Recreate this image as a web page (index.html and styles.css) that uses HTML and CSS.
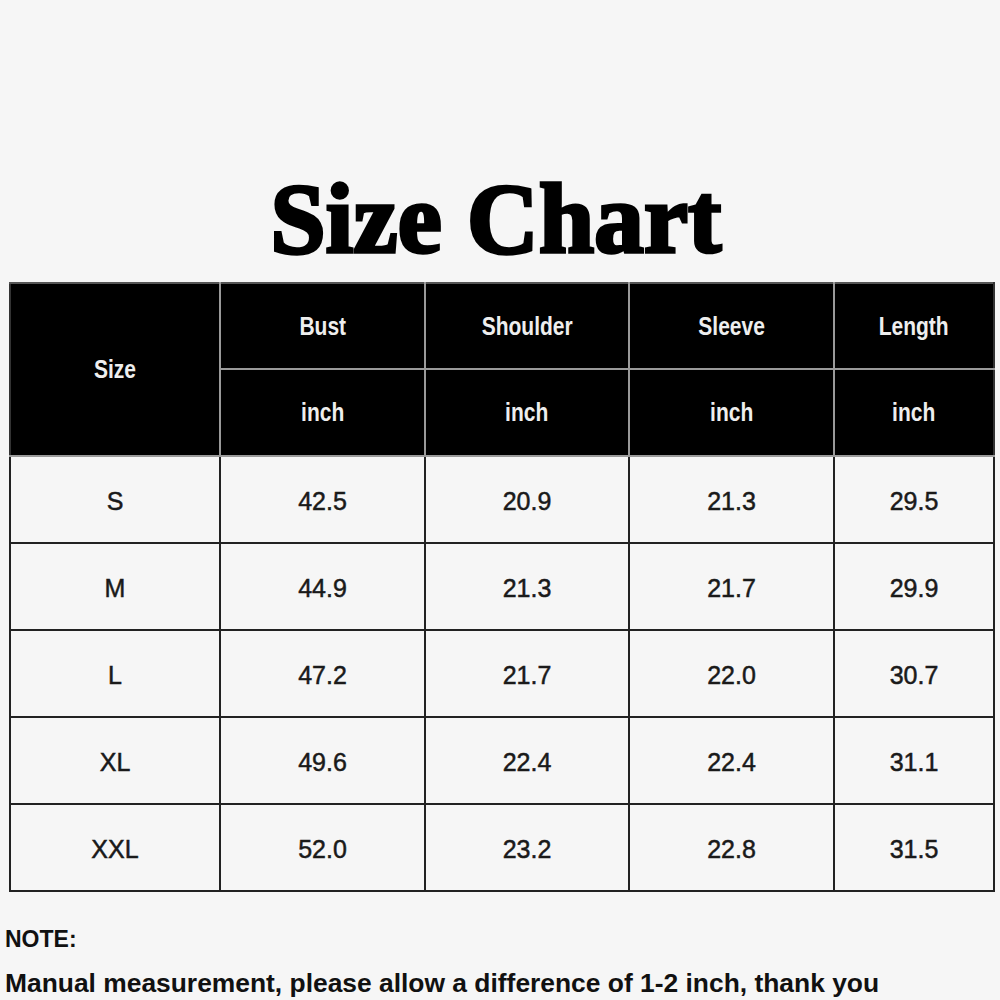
FILE: index.html
```html
<!DOCTYPE html>
<html>
<head>
<meta charset="utf-8">
<link rel="stylesheet" href="styles.css">
</head>
<body>
<div class="page">
  <h1 class="title">Size Chart</h1>
  <table class="chart">
    <colgroup>
      <col class="c-size"><col class="c-mid"><col class="c-mid2"><col class="c-mid"><col class="c-last">
    </colgroup>
    <thead>
      <tr class="hrow">
        <th rowspan="2"><span class="hl">Size</span></th>
        <th><span class="hl">Bust</span></th>
        <th><span class="hl">Shoulder</span></th>
        <th><span class="hl">Sleeve</span></th>
        <th><span class="hl">Length</span></th>
      </tr>
      <tr class="hrow hrow2">
        <th><span class="hl">inch</span></th>
        <th><span class="hl">inch</span></th>
        <th><span class="hl">inch</span></th>
        <th><span class="hl">inch</span></th>
      </tr>
    </thead>
    <tbody>
      <tr><td>S</td><td>42.5</td><td>20.9</td><td>21.3</td><td>29.5</td></tr>
      <tr><td>M</td><td>44.9</td><td>21.3</td><td>21.7</td><td>29.9</td></tr>
      <tr><td>L</td><td>47.2</td><td>21.7</td><td>22.0</td><td>30.7</td></tr>
      <tr><td>XL</td><td>49.6</td><td>22.4</td><td>22.4</td><td>31.1</td></tr>
      <tr><td>XXL</td><td>52.0</td><td>23.2</td><td>22.8</td><td>31.5</td></tr>
    </tbody>
  </table>
  <div class="note">
    <p class="note-head">NOTE:</p>
    <p class="note-text">Manual measurement, please allow a difference of 1-2 inch, thank you</p>
  </div>
</div>
</body>
</html>
```

FILE: styles.css
```css
html, body {
  margin: 0;
  padding: 0;
  background: #f6f6f6;
}
.page {
  width: 1000px;
  height: 1000px;
  overflow: hidden;
  padding-top: 169px;
  box-sizing: border-box;
  font-family: "Liberation Sans", Arial, sans-serif;
  color: #111;
}
.title {
  margin: 0;
  padding-right: 8px;
  font-family: "Liberation Serif", "Times New Roman", serif;
  font-weight: 700;
  font-size: 99px;
  line-height: 100px;
  text-align: center;
  color: #000;
  -webkit-text-stroke: 3.5px #000;
  letter-spacing: 0.3px;
}
.chart {
  margin: 13px 0 0 9px;
  width: 984px;
  table-layout: fixed;
  border-collapse: collapse;
}
.c-size { width: 210px; }
.c-mid { width: 205px; }
.c-mid2 { width: 204px; }
.c-last { width: 160px; }
.chart th {
  background: #000;
  color: #eee;
  border: 2px solid #9a9a9a;
  font-family: "Liberation Sans", sans-serif;
  font-weight: 700;
  font-size: 25px;
  height: 84px;
  padding: 0;
  text-align: center;
  vertical-align: middle;
}
.hrow2 th {
  height: 85px;
}
.hl {
  display: inline-block;
  transform: scaleX(0.84);
}
.chart thead tr:first-child th {
  border-top-color: #555;
}
.chart thead th:first-child {
  border-left-color: #333;
}
.chart thead th:last-child {
  border-right-color: #333;
}
.chart td {
  border: 2px solid #222;
  height: 87px;
  padding: 3px 0 0 0;
  box-sizing: border-box;
  text-align: center;
  vertical-align: middle;
  font-size: 25px;
  color: #1a1a1a;
  -webkit-text-stroke: 0.5px #1a1a1a;
}
.note {
  margin-top: 25px;
  padding-left: 5px;
}
.note p {
  margin: 0;
  font-weight: 700;
  color: #111;
}
.note-head {
  font-size: 23px;
  line-height: 44px;
}
.note-text {
  font-size: 26.4px;
  line-height: 44px;
}
```
